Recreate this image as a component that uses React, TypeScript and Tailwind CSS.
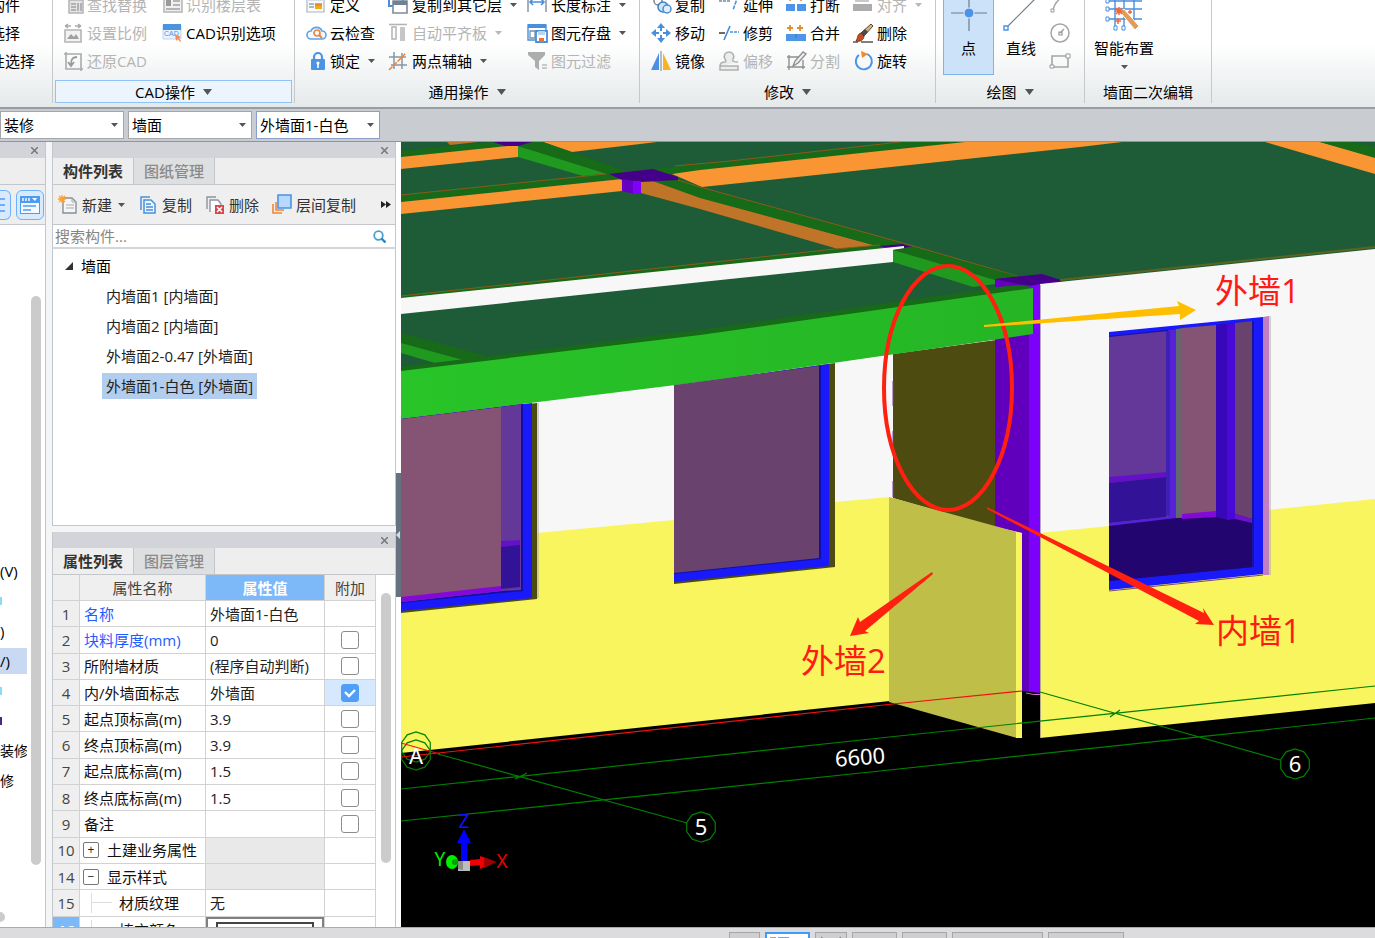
import React, { useState } from "react";

type Kids = { children?: React.ReactNode };

const Ico = ({ children, size = 20 }: Kids & { size?: number }) => (
  <svg width={size} height={size} viewBox={`0 0 ${size} ${size}`} className="shrink-0 overflow-visible" fill="none" aria-hidden="true">
    {children}
  </svg>
);

const Caret = ({ dim = false, big = false }: { dim?: boolean; big?: boolean }) => (
  <svg width={big ? 9 : 7} height={big ? 6 : 4} viewBox="0 0 8 4" preserveAspectRatio="none" className="shrink-0" aria-hidden="true">
    <path d="M0 0h8L4 4z" fill={dim ? "#b8b8b8" : "#555"} />
  </svg>
);

const G = "#b4b4b4";
const B = "#4a8fdc";
const O = "#f0853a";

const icons: Record<string, React.ReactNode> = {
  find: (<><path d="M6 5h14v13H6z" fill="#e4e4e4" stroke={G} strokeWidth="1.5" /><path d="M8 9h5M8 12h5M8 15h5M15 8v8M18 8v8" stroke="#a0a0a0" strokeWidth="1.5" /></>),
  floors: (<><path d="M2 3h18v14H2z" fill="#f0f0f0" stroke={G} strokeWidth="1.5" /><path d="M4 5h5v6H4z" fill="#999" /><path d="M11 6h7M11 10h7M4 14h14" stroke="#a0a0a0" strokeWidth="1.5" /></>),
  scale: (<><path d="M2 3h6M2 3l3-2M2 3l3 2M12 3h6M18 3l-3-2M18 3l-3 2" stroke="#a9a9a9" strokeWidth="1.4" /><path d="M2 7h16v12H2z" fill="#f2f2f2" stroke="#b5b5b5" strokeWidth="1.6" /><path d="M4 16l4-5 3 3 2-3 3 5z" fill="#a0a0a0" /></>),
  cad: (<><path d="M1 2h18v14H1z" fill="#eaf4ff" stroke="#b9d6f5" /><path d="M1 1h18v6H1z" fill="#4c93df" /><text x="2" y="13" fontSize="7" fontFamily="Liberation Sans" fill={B}>CAD</text><path d="M13 11l6 3-2 1 2 3-1 1-2-3-2 2z" fill="#f58a5a" /></>),
  restore: (<><path d="M3 1v17h17M1 3h17v17" stroke="#aaa" strokeWidth="1.6" /><path d="M14 6c-5 0-6 3-6 8M5 11l3 4 3-4" stroke="#999" strokeWidth="1.8" /></>),
  define: (<><path d="M1 2h17v15H1z" fill="#fafafa" stroke="#a9b4bf" strokeWidth="1.2" /><path d="M1 2h17v4H1z" fill="#d7dfe8" /><path d="M3 9h5M3 12h5" stroke="#8aa" strokeWidth="1.5" /><path d="M9 8h7v6H9z" fill="#f5a623" /><path d="M9 10h7" stroke="#e07820" /></>),
  cloud: (<><path d="M5 16a4 4 0 0 1 0-8 6 6 0 0 1 11 0 4 4 0 0 1 0 8z" fill="#f2f9ff" stroke="#5da2ea" strokeWidth="1.6" /><circle cx="11" cy="10" r="3" stroke={O} strokeWidth="1.7" /><path d="M13 12l3 3" stroke={O} strokeWidth="2" /></>),
  lock: (<><path d="M8 9V6a4 4 0 0 1 8 0v3" stroke="#4b93e3" strokeWidth="2.2" /><rect x="5" y="8" width="14" height="11" rx="1" fill="#4b93e3" /><circle cx="12" cy="12" r="1.6" fill="#fff" /><path d="M12 12v5" stroke="#fff" strokeWidth="1.6" /></>),
  layerCopy: (<><path d="M1 0h14v11H1z" fill="#fff" stroke={B} strokeWidth="2" /><path d="M5 6h14v12H5z" fill="#fff" stroke="#7d8b99" strokeWidth="1.6" /><path d="M5 6h14v4H5z" fill="#6f8294" /></>),
  align: (<><path d="M1 1.500h18" stroke={G} strokeWidth="1.6" /><path d="M4 4h4v12H4z" fill="#fff" stroke={G} strokeWidth="1.5" /><path d="M12 4h5v14h-5z" fill="#c6c6c6" /></>),
  axis: (<><path d="M6 1v17M14 2v16M1 6h17M3 14h16" stroke="#8795a3" strokeWidth="1.5" /><path d="M1 19L18 2" stroke={O} strokeWidth="1.6" strokeDasharray="5 1" /></>),
  dim: (<><path d="M1 2v15M19 2v15" stroke="#8795a3" strokeWidth="1.5" /><path d="M3 7h14M6 4L3 7l3 3M14 4l3 3-3 3" stroke={B} strokeWidth="1.6" /></>),
  save: (<><path d="M1 2h18v15H1z" fill="#fff" stroke={B} strokeWidth="1.4" /><path d="M1 1h18v4H1z" fill={B} /><path d="M3 8h5v7H3z" stroke="#7890a8" strokeWidth="1.3" /><path d="M9 8h11v11H9z" fill="#fff" stroke={B} strokeWidth="1.8" /><path d="M11 8h7v4h-7z" fill="#b8d5f4" /><path d="M12 15h5v4h-5z" fill="#f07030" /></>),
  filter: (<><path d="M1 1h17v3l-6 6v9l-4-3v-6L1 4z" fill="#adadad" /><path d="M15 14h5M15 17h5" stroke="#bbb" strokeWidth="1.4" /></>),
  copy: (<><circle cx="7" cy="6" r="4" stroke="#7a8794" strokeWidth="1.5" /><circle cx="12" cy="12" r="5" fill="#cfe4fa" stroke="#3f7fc0" strokeWidth="1.5" /><circle cx="16" cy="14" r="4" fill="#dceeff" stroke="#4a8fc8" strokeWidth="1.5" /></>),
  move: (<path d="M10 0l4 5h-3v3H9V5H6zM10 20l-4-5h3v-3h2v3h3zM0 10l5-4v3h3v2H5v3zM20 10l-5 4v-3h-3V9h3V6z" fill="#4a8fdc" />),
  mirror: (<><path d="M8 2v17H0z" fill="#4a90e2" /><path d="M12 2v17h8z" fill="#fbb124" /><path d="M10 0v20" stroke="#8a939c" strokeWidth="1.2" /></>),
  extend: (<><path d="M0 6h11" stroke="#6f8aa5" strokeWidth="1.5" strokeDasharray="3 1" /><path d="M19 1l-5 14" stroke={B} strokeWidth="1.6" strokeDasharray="4 1" /></>),
  trim: (<><path d="M0 10h6" stroke="#444" strokeWidth="1.6" /><path d="M11 9h9" stroke={B} strokeWidth="1.6" strokeDasharray="3 1" /><path d="M11 3L5 17" stroke={B} strokeWidth="1.7" /></>),
  offset: (<><path d="M1 15c0-3 2-4 5-4 1 0 1-2 0-3-2-3 0-7 4-7s6 4 4 7c-1 2 0 3 5 3M1 15v4h18v-4z" fill="#ececec" stroke="#b0b0b0" strokeWidth="1.5" /></>),
  breakup: (<><path d="M0 9h9v7H0zM11 9h9v7h-9z" fill="#4e95e8" /><path d="M4 1v5M15 1v5M2 4h4M13 4h5" stroke="#e98a2a" strokeWidth="1.6" /></>),
  merge: (<><path d="M0 11h20v7H0z" fill="#4e95e8" /><path d="M10 11v4" stroke="#3572ba" /><path d="M4 2v6M14 2v6M1 5h6M11 5h6" stroke="#e98a2a" strokeWidth="1.8" /></>),
  split: (<><path d="M1 6h12M1 16h18M3 4v15M17 9v9" stroke="#8f8f8f" strokeWidth="1.4" /><path d="M7 15l2-5 8-9 3 2-8 9z" fill="#eee" stroke="#8f8f8f" strokeWidth="1.4" /></>),
  alignTo: (<><path d="M2 2h14v5H2z" fill="#c9c9c9" /><path d="M0 9h19v7H0z" fill="#adadad" /></>),
  brush: (<><path d="M0 19h5M8 19h12" stroke="#555" strokeWidth="1.3" /><path d="M18 1l2 2-9 10-3-3z" fill="#d8b27a" stroke="#5b4630" /><path d="M12 6l3 3-4 4-3-3z" fill="#4a4a4a" /><path d="M8 10l3 3c0 4-4 6-8 5 2-3 1-7 5-8z" fill="#c74e22" stroke="#5e2a15" strokeWidth=".8" /></>),
  rotate: (<><path d="M6 4a8 8 0 1 0 8-1" stroke="#4a93e6" strokeWidth="1.9" /><path d="M8 0l7 3-6 4z" fill="#f08a2c" /></>),
  arc: (<><path d="M18 0C10 2 4 8 3 16" stroke="#a5a5a5" strokeWidth="1.5" /><path d="M1 14h3v3H1z" fill="#fff" stroke="#999" /></>),
  circle: (<><circle cx="10" cy="10" r="9" stroke="#a5a5a5" strokeWidth="1.5" /><path d="M10 10l4-4M9 9h3v3H9z" stroke="#999" strokeWidth="1.2" /></>),
  rect: (<><path d="M2 5h16v11H2z" stroke="#a5a5a5" strokeWidth="1.6" /><path d="M0 14h4v3H0zM16 3h4v4h-4z" fill="#fff" stroke="#999" /></>),
  newDoc: (<><path d="M5 3h9l4 4v11H5z" fill="#f4f4f4" stroke="#87909a" strokeWidth="1.4" /><path d="M14 3v4h4M8 10h8M8 13h8" stroke="#a5adb5" /><path d="M1 1l6 6M7 1L1 7M4 0v8M0 4h8" stroke="#ffa02e" strokeWidth="1.3" /></>),
  copyDoc: (<><path d="M3 15V2h9" stroke="#4a90dd" strokeWidth="1.5" /><path d="M6 5h7l4 4v9H6z" fill="#eef6ff" stroke="#4a90dd" strokeWidth="1.5" /><path d="M8 9h5M8 12h7M8 15h7" stroke="#4a90dd" strokeWidth="1.3" /></>),
  delDoc: (<><path d="M2 14V2h9" stroke="#8c959e" strokeWidth="1.4" /><path d="M5 17V5h8l3 4v4" fill="#fff" stroke="#8c959e" strokeWidth="1.4" /><path d="M10 10h9v9h-9z" fill="#d9464d" /><path d="M12 12l5 5M17 12l-5 5" stroke="#fff" strokeWidth="1.5" /></>),
  layers: (<><path d="M1 9v9h9M4 7v8h8" stroke={O} strokeWidth="1.6" /><path d="M6 0h13v13H6z" fill="#b8d9ff" stroke="#4a93e6" strokeWidth="1.6" /></>),
};

type Cmd = { t: string; i?: string; off?: boolean; menu?: boolean };

const Command = ({ t, i, off, menu }: Cmd) => (
  <button type="button" disabled={off} className={`flex h-7 items-center gap-1 whitespace-nowrap ${off ? "text-[#b4b4b4]" : "text-black"}`}>
    {i && <Ico>{icons[i]}</Ico>}
    <span>{t}</span>
    {menu && <span className="ml-1 flex"><Caret dim={off} /></span>}
  </button>
);

const Column = ({ items, w }: { items: Cmd[]; w: string }) => (
  <div className={`flex shrink-0 flex-col items-start ${w}`}>
    {items.map((c) => <Command key={c.t} {...c} />)}
  </div>
);

const Group = ({ w, label, active, caret = true, children }: Kids & { w: string; label?: string; active?: boolean; caret?: boolean }) => (
  <section className={`flex shrink-0 flex-col justify-end pb-1 ${w}`}>
    <div className="flex shrink-0">{children}</div>
    {label ? (
      <button type="button" className={`mx-0.5 mt-[5px] flex h-[23px] shrink-0 items-center justify-center gap-2 border ${active ? "border-[#8fc3f6] bg-[#ecf4fe]" : "border-transparent"}`}>
        {label}
        {caret && <Caret big />}
      </button>
    ) : <div className="mt-[5px] h-[23px] shrink-0" />}
  </section>
);

const Rule = () => <div className="mb-1 w-px shrink-0 bg-[#c6c9cb]" />;

const Ribbon = () => (
  <header className="flex h-[107px] shrink-0 overflow-hidden bg-linear-to-b from-white from-40% to-[#e5e9ea]">
    <Group w="w-[52px]">
      <div className="-ml-2.5 flex"><Column w="w-[60px]" items={[{ t: "构件" }, { t: "选择" }, { t: "性选择" }]} /></div>
    </Group>
    <Rule />
    <Group w="w-[241px]" label="CAD操作" active>
      <div className="flex pl-2.5">
        <Column w="w-[99px]" items={[{ t: "查找替换", i: "find", off: true }, { t: "设置比例", i: "scale", off: true }, { t: "还原CAD", i: "restore", off: true }]} />
        <Column w="w-[120px]" items={[{ t: "识别楼层表", i: "floors", off: true }, { t: "CAD识别选项", i: "cad" }]} />
      </div>
    </Group>
    <Rule />
    <Group w="w-[344px]" label="通用操作">
      <div className="flex pl-[11px]">
        <Column w="w-[82px]" items={[{ t: "定义", i: "define" }, { t: "云检查", i: "cloud" }, { t: "锁定", i: "lock", menu: true }]} />
        <Column w="w-[139px]" items={[{ t: "复制到其它层", i: "layerCopy", menu: true }, { t: "自动平齐板", i: "align", off: true, menu: true }, { t: "两点辅轴", i: "axis", menu: true }]} />
        <Column w="w-[108px]" items={[{ t: "长度标注", i: "dim", menu: true }, { t: "图元存盘", i: "save", menu: true }, { t: "图元过滤", i: "filter", off: true }]} />
      </div>
    </Group>
    <Rule />
    <Group w="w-[295px]" label="修改">
      <div className="flex pl-[11px]">
        <Column w="w-[68px]" items={[{ t: "复制", i: "copy" }, { t: "移动", i: "move" }, { t: "镜像", i: "mirror" }]} />
        <Column w="w-[67px]" items={[{ t: "延伸", i: "extend" }, { t: "修剪", i: "trim" }, { t: "偏移", i: "offset", off: true }]} />
        <Column w="w-[67px]" items={[{ t: "打断", i: "breakup" }, { t: "合并", i: "merge" }, { t: "分割", i: "split", off: true }]} />
        <Column w="w-[72px]" items={[{ t: "对齐", i: "alignTo", off: true, menu: true }, { t: "删除", i: "brush" }, { t: "旋转", i: "rotate" }]} />
      </div>
    </Group>
    <Rule />
    <Group w="w-[148px]" label="绘图">
      <div className="flex pl-[7px]">
        <button type="button" className="flex h-[84px] w-[51px] flex-col items-center justify-end border border-[#7db4ee] bg-[#cbe2f9] pb-4">
          <Ico size={36}><path d="M18 0v36M0 18h36" stroke="#6b7c8d" strokeWidth="1.2" /><circle cx="18" cy="18" r="5" fill="#4a93e6" stroke="#dcecff" /></Ico>
          <span className="mt-[7px]">点</span>
        </button>
        <button type="button" className="ml-0.5 flex h-[84px] w-[50px] flex-col items-center justify-end pb-[17px]">
          <Ico size={36}><path d="M3 33L34 2" stroke="#6b7c8d" strokeWidth="1.2" /><path d="M1 31h4v4H1zM31 0h4v4h-4z" fill="#fff" stroke="#4a93e6" strokeWidth="1.4" /></Ico>
          <span className="mt-[7px]">直线</span>
        </button>
        <div className="ml-1 flex flex-col">
          {[["弧线", "arc"], ["圆", "circle"], ["矩形", "rect"]].map(([n, k]) => (
            <button key={k} type="button" aria-label={n} className="flex h-7 w-5 items-center"><Ico>{icons[k]}</Ico></button>
          ))}
        </div>
      </div>
    </Group>
    <Rule />
    <Group w="w-[126px]" label="墙面二次编辑" caret={false}>
      <button type="button" className="ml-[9px] flex h-[84px] flex-col items-center justify-end pb-1">
        <Ico size={36}>
          <path d="M2 6h34M2 14h34M2 24h34M9 0v33M18 0v33M28 0v26" stroke="#4a8fdc" strokeWidth="1.4" />
          <path d="M0 4h3v4H0zM0 12h3v4H0zM0 22h3v4H0zM8 31h3v4H8zM16 31h3v4h-3z" fill="#fff" stroke="#4a8fdc" />
          <path d="M14 17l4-3 15 17-4 4z" fill="#e59a55" stroke="#fff" />
          <path d="M13 12v8M9 16h8M10 13l6 6M16 13l-6 6M12 23v6M9 26h6M24 15v4M22 17h4" stroke="#f0673a" strokeWidth="1.5" />
        </Ico>
        <span className="mt-[7px]">智能布置</span>
        <span className="flex h-[13px] items-center pt-1"><Caret /></span>
      </button>
    </Group>
    <Rule />
  </header>
);

const Combo = ({ label, options, active }: { label: string; options: string[]; active?: boolean }) => (
  <div className="grid w-[124px] items-center">
    <select aria-label={label} className={`col-start-1 row-start-1 h-7 w-full appearance-none border bg-white pl-[3px] ${active ? "border-[#8b9ec8]" : "border-[#a3a7ab]"}`}>
      {options.map((o) => <option key={o}>{o}</option>)}
    </select>
    <span className="pointer-events-none col-start-1 row-start-1 mr-1.5 justify-self-end"><Caret /></span>
  </div>
);

const TitleStrip = () => (
  <div className="flex h-4 shrink-0 items-center justify-end bg-[#d2d4d9] pr-[7px]">
    <button type="button" aria-label="关闭" className="flex">
      <svg width="7" height="7" viewBox="0 0 7 7"><path d="M0 0l7 7M7 0L0 7" stroke="#777" strokeWidth="1.5" /></svg>
    </button>
  </div>
);

const Tabs = ({ names }: { names: string[] }) => (
  <div role="tablist" className="flex h-[27px] shrink-0 border-b border-[#c3c7cc] bg-[#eee]">
    {names.map((n, i) => (
      <button key={n} type="button" role="tab" aria-selected={i === 0} className={`border-r border-[#c3c7cc] px-[10px] ${i === 0 ? "font-bold text-[#333]" : "bg-[#dedfe0] font-medium text-[#8a8a8a]"}`}>
        {n}
      </button>
    ))}
  </div>
);

const Navigator = () => (
  <aside className="flex w-[46px] shrink-0 flex-col overflow-hidden border-r border-[#c3c7cc] bg-white">
    <TitleStrip />
    <div className="h-[27px] shrink-0 border-b border-[#c3c7cc] bg-[#eee]" />
    <div className="flex h-10 shrink-0 items-center gap-[5px] border-b border-[#c3c7cc] bg-[#eee]">
      <button type="button" aria-label="列表" className="flex h-[30px] w-[11px] items-center rounded-r-md border border-l-0 border-[#6db0fb] bg-[#d9eaff]">
        <svg width="6" height="16" viewBox="0 0 6 16"><path d="M0 2h5M0 8h5M0 14h5" stroke="#4c9cf5" strokeWidth="1.6" /></svg>
      </button>
      <button type="button" aria-label="面板" className="flex h-[30px] w-7 items-center justify-center rounded-md border border-[#6db0fb] bg-[#d9eaff]">
        <svg width="20" height="18" viewBox="0 0 20 18"><path d="M0 0h20v18H0z" fill="#4c9cf5" /><path d="M1 7h18v10H1z" fill="#f4f9ff" /><path d="M3 10h13M3 14h8" stroke="#4c9cf5" strokeWidth="1.6" /><path d="M3 2v3M6 2v3M9 2v3" stroke="#fff" strokeWidth="1.4" /><path d="M12 2h5l-2 3z" fill="#fff" /></svg>
      </button>
    </div>
    <div className="flex min-h-0 flex-1 gap-1">
      <div className="flex w-[27px] shrink-0 flex-col overflow-hidden whitespace-nowrap">
        <div className="mt-[331px] flex flex-col">
          <span className="h-[30px] leading-[30px]">(V)</span>
          <span className="flex h-[30px] items-center"><i className="h-2 w-[2px] bg-[#8adcf2]" /></span>
          <span className="h-[30px] leading-[30px]">)</span>
          <span className="my-0.5 h-[26px] bg-[#c8d9f1] leading-[26px]">/)</span>
          <span className="flex h-[30px] items-center"><i className="h-2 w-[2px] bg-[#8adcf2]" /></span>
          <span className="flex h-[30px] items-center"><i className="h-2 w-[2px] bg-[#4a2a80]" /></span>
          <span className="h-[30px] text-sm leading-[30px]">装修</span>
          <span className="h-[30px] text-sm leading-[30px]">修</span>
        </div>
        <div className="mt-auto mb-[5px] h-[10px] w-[5px] shrink-0 rounded-r-full bg-[#cbcbcb]" />
      </div>
      <div className="mt-[71px] mb-[62px] w-[10px] shrink-0 rounded-full bg-[#cbcbcb]" />
    </div>
  </aside>
);

const components = ["内墙面1 [内墙面]", "内墙面2 [内墙面]", "外墙面2-0.47 [外墙面]", "外墙面1-白色 [外墙面]"];

const ComponentPanel = () => {
  const [sel, setSel] = useState(3);
  return (
    <section className="flex min-h-0 flex-1 flex-col border-x border-b border-[#c3c7cc] bg-white">
      <TitleStrip />
      <Tabs names={["构件列表", "图纸管理"]} />
      <div className="flex h-10 shrink-0 items-center gap-[13px] border-b border-[#c3c7cc] bg-[#efefef] pl-[5px] text-[#333]">
        {[["新建", "newDoc"], ["复制", "copyDoc"], ["删除", "delDoc"], ["层间复制", "layers"]].map(([t, k]) => (
          <button key={k} type="button" className="flex items-center gap-1">
            <Ico>{icons[k]}</Ico>{t}
            {k === "newDoc" && <span className="ml-0.5 flex"><Caret /></span>}
          </button>
        ))}
        <button type="button" aria-label="更多" className="mr-1 ml-auto flex">
          <svg width="10" height="7" viewBox="0 0 10 7"><path d="M0 0l5 3.500L0 7zM5 0l5 3.500L5 7z" fill="#222" /></svg>
        </button>
      </div>
      <div className="flex h-6 shrink-0 items-center border-b-2 border-[#d3d6d9]">
        <input aria-label="搜索构件" placeholder="搜索构件..." className="min-w-0 flex-1 pl-0.5 outline-none placeholder:text-[#858585]" />
        <span className="mr-[9px]"><svg width="13" height="13" viewBox="0 0 13 13" fill="none"><circle cx="5.500" cy="5.500" r="4.300" stroke="#4b9fce" strokeWidth="1.800" /><path d="M8.500 8.500l4 4" stroke="#2e86bd" strokeWidth="2.400" /></svg></span>
      </div>
      <div className="flex flex-col items-start pt-0.5">
        <div className="flex h-[30px] items-center gap-2 pl-3">
          <svg width="8" height="8" viewBox="0 0 8 8"><path d="M8 0v8H0z" fill="#333" /></svg>墙面
        </div>
        {components.map((c, i) => (
          <button key={c} type="button" onClick={() => setSel(i)} className={`my-0.5 ml-[49px] h-[26px] px-1 text-[#222] ${i === sel ? "bg-[#b3cdee]" : ""}`}>{c}</button>
        ))}
      </div>
    </section>
  );
};

type Prop = { n: number; name: string; val?: string; box?: boolean; on?: boolean; blue?: boolean; fold?: string; child?: boolean };
const props: Prop[] = [
  { n: 1, name: "名称", val: "外墙面1-白色", blue: true },
  { n: 2, name: "块料厚度(mm)", val: "0", box: true, blue: true },
  { n: 3, name: "所附墙材质", val: "(程序自动判断)", box: true },
  { n: 4, name: "内/外墙面标志", val: "外墙面", box: true, on: true },
  { n: 5, name: "起点顶标高(m)", val: "3.9", box: true },
  { n: 6, name: "终点顶标高(m)", val: "3.9", box: true },
  { n: 7, name: "起点底标高(m)", val: "1.5", box: true },
  { n: 8, name: "终点底标高(m)", val: "1.5", box: true },
  { n: 9, name: "备注", box: true },
  { n: 10, name: "土建业务属性", fold: "+" },
  { n: 14, name: "显示样式", fold: "−" },
  { n: 15, name: "材质纹理", val: "无", child: true },
  { n: 16, name: "填充颜色", child: true },
];

const Tick = ({ name, on }: { name: string; on?: boolean }) => (
  <span className="grid place-items-center">
    <input type="checkbox" aria-label={name} defaultChecked={on} className="peer col-start-1 row-start-1 size-[18px] appearance-none rounded-[3px] border border-[#8c8c8c] bg-white checked:border-[#4f9ff8] checked:bg-[#4f9ff8]" />
    <svg width="12" height="10" viewBox="0 0 12 10" fill="none" className="pointer-events-none invisible col-start-1 row-start-1 peer-checked:visible"><path d="M1 4l4 4 6-6" stroke="#fff" strokeWidth="2.400" /></svg>
  </span>
);

const cell = "border-r border-b border-[#d2d2d2] p-0";

const PropertyPanel = () => (
  <section className="flex h-[395px] shrink-0 flex-col overflow-hidden border-x border-[#c3c7cc] bg-white">
    <TitleStrip />
    <Tabs names={["属性列表", "图层管理"]} />
    <div className="flex min-h-0 flex-1 items-start overflow-hidden">
      <table className="h-[369px] w-[323px] shrink-0 table-fixed border-separate border-spacing-0">
        <colgroup><col className="w-[27px]" /><col className="w-[126px]" /><col className="w-[119px]" /><col className="w-[51px]" /></colgroup>
        <thead>
          <tr className="h-[26px] bg-[#efefef] text-[#444]">
            <th className={cell} aria-label="序号" />
            <th className={`${cell} font-normal`}>属性名称</th>
            <th className={`${cell} bg-[#7db8f8] font-bold text-white`}>属性值</th>
            <th className={`${cell} font-normal`}>附加</th>
          </tr>
        </thead>
        <tbody>
          {props.map((p) => (
            <tr key={p.n} className="h-[26px]">
              <td className={`${cell} text-center ${p.n === 16 ? "bg-[#7db8f8] font-bold text-white" : "bg-[#efefef] text-[#444]"}`}>{p.n}</td>
              <td className={`${cell} whitespace-nowrap ${p.blue ? "text-[#1f5cff]" : "text-[#111]"}`}>
                <div className={`flex items-center ${p.fold ? "gap-2 pl-[3px]" : "pl-1"}`}>
                  {p.fold && <button type="button" aria-label={p.name} className="flex size-4 items-center justify-center rounded-[2px] border border-[#777] text-xs leading-3 text-[#222]">{p.fold}</button>}
                  {p.child && <span className="ml-[7px] flex h-5 w-7 shrink-0 items-center border-l border-[#ddd]"><span className="h-px w-5 bg-[#ddd]" /></span>}
                  <span>{p.name}</span>
                </div>
              </td>
              <td className={`${cell} ${p.fold ? "bg-[#e9e9e9]" : ""} ${p.n === 16 ? "" : "pl-1"} whitespace-nowrap text-[#222]`}>
                {p.n === 16 ? <div className="h-[26px] border-2 border-[#808080] px-2 pt-[3px]"><div className="h-4 border-2 border-[#444] bg-white" /></div> : p.val}
              </td>
              <td className={`${cell} ${p.on ? "bg-[#d5e8fd]" : ""}`}>{p.box && <Tick name={`附加 ${p.name}`} on={p.on} />}</td>
            </tr>
          ))}
        </tbody>
      </table>
      <div className="mt-[18px] ml-[5px] h-[270px] w-[10px] rounded-full bg-[#cbcbcb]" />
    </div>
  </section>
);

const bubble = (cx: number, cy: number) =>
  Array.from({ length: 10 }, (_, k) => {
    const a = (k * Math.PI) / 5 + Math.PI / 2;
    return `${cx + 15 * Math.cos(a)},${cy + 15 * Math.sin(a)}`;
  }).join(" ");

const P = ({ p, f }: { p: string; f: string }) => <polygon points={p} fill={f} />;

const Scene = () => (
  <svg viewBox="401 142 974 785" preserveAspectRatio="xMidYMid slice" className="block h-full w-full bg-black" fontFamily='"Open Sans","Noto Sans CJK SC",sans-serif'>
    <defs>
      <linearGradient id="beam" x1="0" x2="1"><stop offset="0" stopColor="#28c428" /><stop offset="1" stopColor="#25b525" /></linearGradient>
    </defs>
    <P p="401,142 1375,142 1375,250 1040,290 1033,330 401,420" f="#1e5c37" />
    <P p="401,151 493,142 520,142 518,147 401,158" f="#176a17" />
    <P p="401,157 518,145 518,157 401,169" f="#f99532" />
    <P p="447,142 478,142 450,145" f="#bf7427" />
    <P p="493,142 534,142 520,146 505,146" f="#45008a" />
    <P p="543,142 657,142 572,152" f="#f99532" />
    <P p="518,146 518,157 583,176 612,173" f="#1f9a1f" />
    <P p="518,146 532,142 543,142 628,172 610,175" f="#176a17" />
    <P p="401,195 606,174 730,161 900,142 965,142 700,171 610,180 401,202" f="#176a17" />
    <path d="M401 195L606 174M675 166L730 161L900 142" stroke="#8a5a1a" strokeWidth="1" fill="none" />
    <P p="401,202 622,179 622,191 401,214" f="#f99532" />
    <P p="672,174 700,170 965,142 1122,142 1080,147 702,187" f="#f99532" />
    <P p="641,180 655,181 700,197 877,246 838,249 700,209 641,193" f="#bf7427" />
    <P p="650,180 678,179 700,187 903,243 1017,276 995,279 893,250 877,246 700,198" f="#176a17" />
    <path d="M678 180L700 187L903 243L1017 276" stroke="#8a5a1a" strokeWidth="1" fill="none" />
    <P p="609,174 653,169 678,177 678,180 641,182 622,180" f="#45008a" />
    <P p="622,179 634,181 634,194 622,191" f="#6500c2" />
    <P p="633,181 641,181 641,193 633,194" f="#8000ff" />
    <P p="1265,142 1320,142 1375,157 1375,174" f="#f99532" />
    <P p="1320,142 1352,142 1375,147 1375,158" f="#176a17" />
    <P p="401,296 835,249 903,243 903,248 401,300" f="#176a17" />
    <path d="M401 296L835 249L880 245" stroke="#8a5a1a" strokeWidth="1" fill="none" />
    <P p="879,246 903,244 912,247 895,250" f="#45008a" />
    <P p="401,298 730,264 904,246 904,249 893,250 893,262 730,279 401,314" f="#f7f7f7" />
    <P p="893,250 893,262 973,287 995,284 995,278" f="#1f9a1f" />
    <P p="893,250 910,247 1017,276 995,280" f="#176a17" />
    <P p="401,333 401,343 463,361 487,356" f="#176a17" />
    <P p="401,343 401,353 435,363 463,360" f="#1f9a1f" />
    <P p="401,367 700,330 1000,287 1013,284 1033,289 700,336 401,372" f="#176a17" />
    <P p="401,418 700,381 1033,334 1030,540 890,500 401,550" f="#f7f7f7" />
    <P p="401,547 537,533 674,520 835,502 890,497 890,701 401,753" f="#f8f55e" />
    <P p="893,354 996,340 996,528 893,498" f="#4d4b0f" />
    <path d="M893 381v25M893 431v20M893 481v16" stroke="#7a3cb8" />
    <P p="995,279 1042,274 1064,281 1040,287 1013,284 995,287" f="#45008a" />
    <P p="995,279 1022,285 995,287" f="#6500c2" />
    <P p="995,339 1030,334 1030,692 1022,691 1022,533 995,527" f="#6000bc" />
    <P p="1029,286 1040,284 1040,693 1034,694 1029,693" f="#7d00fa" />
    <P p="1022,691 1040,693 1040,740 1022,740" f="#000" />
    <path d="M1026 693l8 1.500h6" stroke="#d070c0" fill="none" />
    <P p="401,371 700,335 1033,288 1033,334 730,378 700,382 401,419" f="url(#beam)" />
    <P p="1040,284 1375,249 1375,500 1040,534" f="#f7f7f7" />
    <path d="M1060 280L1375 247" stroke="#5a6420" strokeWidth="2" />
    <P p="1040,533 1375,499 1375,703 1040,738" f="#f8f55e" />
    <path d="M1040.500 285v453" stroke="#8b7596" strokeOpacity=".6" />
    <P p="889,497 1017,532 1017,738 889,702" f="#bfbe49" />
    <P p="1016,532 1022,533 1022,738 1016,738" f="#f8f55e" />

    <P p="401,419 537,403 537,599 401,613" f="#4d4b0f" />
    <P p="401,419 532,403 532,598 401,611" f="#1919fa" />
    <P p="401,419 523,404 523,591 401,603" f="#1010a8" />
    <P p="401,419 501,407 501,591 401,602" f="#855373" />
    <P p="401,597 501,586 501,591 401,602" f="#8408d8" />
    <P p="501,407 521,404 521,590 501,591" f="#643898" />
    <P p="501,541 520,540 520,546 501,547" f="#6510c8" />
    <P p="501,547 520,545 520,587 501,589" f="#321296" />
    <path d="M538 403v195" stroke="#a5a5a5" />

    <P p="674,386 835,363 835,567 674,584" f="#4d4b0f" />
    <P p="674,386 829,364 829,566 674,582" f="#1919fa" />
    <P p="674,386 821,366 821,559 674,574" f="#1010a8" />
    <P p="674,385 819,366 819,558 674,573" f="#69426e" />

    <P p="1109,332 1263,317 1263,574 1109,590" f="#1919fa" />
    <P p="1263,317 1269,316 1269,575 1263,575" f="#c07fc0" />
    <path d="M1270 316v259" stroke="#aaa" />
    <path d="M1109 591L1263 575" stroke="#7a4a6a" />
    <P p="1109,336 1254,321 1254,567 1109,581" f="#1414a0" />
    <P p="1109,337 1168,331 1168,520 1109,525" f="#643898" />
    <P p="1109,477 1166,472 1166,477 1109,483" f="#6510c8" />
    <P p="1109,483 1166,477 1166,517 1109,523" f="#321296" />
    <P p="1109,523 1168,517 1168,330 1177,329 1177,520 1109,527" f="#5522d8" />
    <P p="1166,331 1170,331 1170,515 1166,516" f="#3f20b0" />
    <P p="1176,329 1183,328 1183,519 1176,518" f="#66666e" />
    <P p="1182,328 1216,325 1216,514 1182,516" f="#855373" />
    <P p="1109,526 1176,518 1230,517 1252,523 1252,567 1109,581" f="#23056f" />
    <P p="1182,514 1216,511 1216,517 1182,519" f="#8408d8" />
    <P p="1216,325 1228,324 1228,520 1216,517" f="#3808b8" />
    <P p="1227,324 1235,323 1235,519 1227,520" f="#4a08d8" />
    <P p="1235,323 1252,321 1252,519 1235,514" f="#69426e" />
    <P p="1235,514 1252,519 1252,523 1235,519" f="#7010c8" />

    <g stroke="#008000" strokeWidth="1.200" fill="none">
      <path d="M401 789L880 738L1375 686M401 821L880 771L1375 718M438 754L687 823M1040 692L1280 760M515 779l12-6M1110 717l10-7" />
      <polygon points={bubble(701, 827)} />
      <polygon points={bubble(1295, 764)} />
      <polygon points={bubble(416, 747)} />
      <polygon points={bubble(416, 755)} />
    </g>
    <path d="M401 757L893 704L1022 691M401 743L440 754" stroke="#f01010" strokeWidth="1.200" fill="none" />
    <g fill="#fff" fontSize="22" textAnchor="middle" fontFamily='"Noto Sans",sans-serif'>
      <text x="701" y="835">5</text>
      <text x="1295" y="772">6</text>
      <text x="416" y="764">A</text>
      <text x="860" y="765" transform="rotate(-4 860 757)">6600</text>
    </g>

    <path d="M464 829l7 14h-4v20h-6v-20h-4z" fill="#0000ff" />
    <path d="M470 860l10-1v-3l8 3 8 3-8 3-8 4v-4l-10 1z" fill="#f00000" />
    <path d="M484 857l12 5-12 6z" fill="#a00000" />
    <ellipse cx="452" cy="862" rx="6" ry="7" fill="#00f000" />
    <circle cx="455" cy="862" r="3" fill="#00a000" />
    <path d="M458 861h12v10h-12z" fill="#bdbdbd" /><path d="M458 861h5v9l-5-1z" fill="#8c8c8c" />
    <g fontSize="19" textAnchor="middle" fontFamily='"Noto Sans",sans-serif'>
      <text x="464" y="828" fill="#1010ff">Z</text>
      <text x="502" y="868" fill="#f00000">X</text>
      <text x="440" y="866" fill="#00f000">Y</text>
    </g>

    <ellipse cx="948" cy="388" rx="64" ry="122" fill="none" stroke="#ff2010" strokeWidth="4" />
    <P p="984,325 1179,306 1177,301 1196,310 1180,320 1180,314 984,327" f="#ffbf00" />
    <P p="987,507 1204,613 1203,608 1214,625 1195,624 1199,621 987,509" f="#ff2010" />
    <P p="932,572 860,622 858,617 850,636 869,633 865,631 933,574" f="#ff2010" />
    <g fill="#ff1a14" fontSize="33">
      <text x="1215" y="303">外墙1</text>
      <text x="801" y="673">外墙2</text>
      <text x="1216" y="643">内墙1</text>
    </g>
  </svg>
);

const StatusBar = () => (
  <footer className="flex h-[11px] shrink-0 items-start gap-[5px] overflow-hidden border-t border-[#a9abad] bg-[#dcdcde] pt-1 pl-[729px]">
    {["w-[31px]", "w-[45px]", "w-[32px]", "w-[45px]", "w-[45px]", "w-[91px]", "w-[76px]"].map((w, i) => (
      <button key={i} type="button" aria-label={`视图 ${i + 1}`} className={`h-6 shrink-0 border ${w} ${i === 1 ? "border-2 border-[#3f9bf5] bg-white" : "border-[#a6a6a8] bg-[#cfcfd1]"}`}>
        {i === 1 && <svg width="20" height="20" viewBox="0 0 20 20" className="ml-[3px]"><path d="M0 3h6v5H0z" fill="#e8915a" /><path d="M8 4h11" stroke="#7fa8d0" strokeWidth="2" /></svg>}
        {i === 2 && <svg width="20" height="20" viewBox="0 0 20 20" className="ml-[5px]"><path d="M0 3l8 8M20 3l-8 8" stroke="#888" strokeWidth="1.500" /></svg>}
      </button>
    ))}
  </footer>
);

export default function App() {
  return (
    <div className='flex h-screen flex-col overflow-hidden bg-[#f4f5f6] font-["Open_Sans","Noto_Sans_CJK_SC",sans-serif] text-[15px] leading-5 text-black'>
      <Ribbon />
      <div className="flex h-[35px] shrink-0 items-center gap-1 border-t-2 border-b border-t-[#979da2] border-b-[#8f9599] bg-[#c9ccd1]">
        <Combo label="专业" options={["装修"]} />
        <Combo label="构件类型" options={["墙面"]} />
        <Combo label="构件" options={["外墙面1-白色"]} active />
      </div>
      <main className="flex min-h-0 flex-1">
        <Navigator />
        <div className="ml-[6px] flex w-[344px] shrink-0 flex-col gap-[6px]">
          <ComponentPanel />
          <PropertyPanel />
        </div>
        <div className="flex w-[5px] shrink-0 flex-col justify-center bg-white">
          <button type="button" aria-label="折叠" className="flex h-[124px] items-center bg-[#66727f]">
            <svg width="4" height="8" viewBox="0 0 4 8"><path d="M4 0v8L0 4z" fill="#d5dbe0" /></svg>
          </button>
        </div>
        <div className="min-w-0 flex-1"><Scene /></div>
      </main>
      <StatusBar />
    </div>
  );
}
